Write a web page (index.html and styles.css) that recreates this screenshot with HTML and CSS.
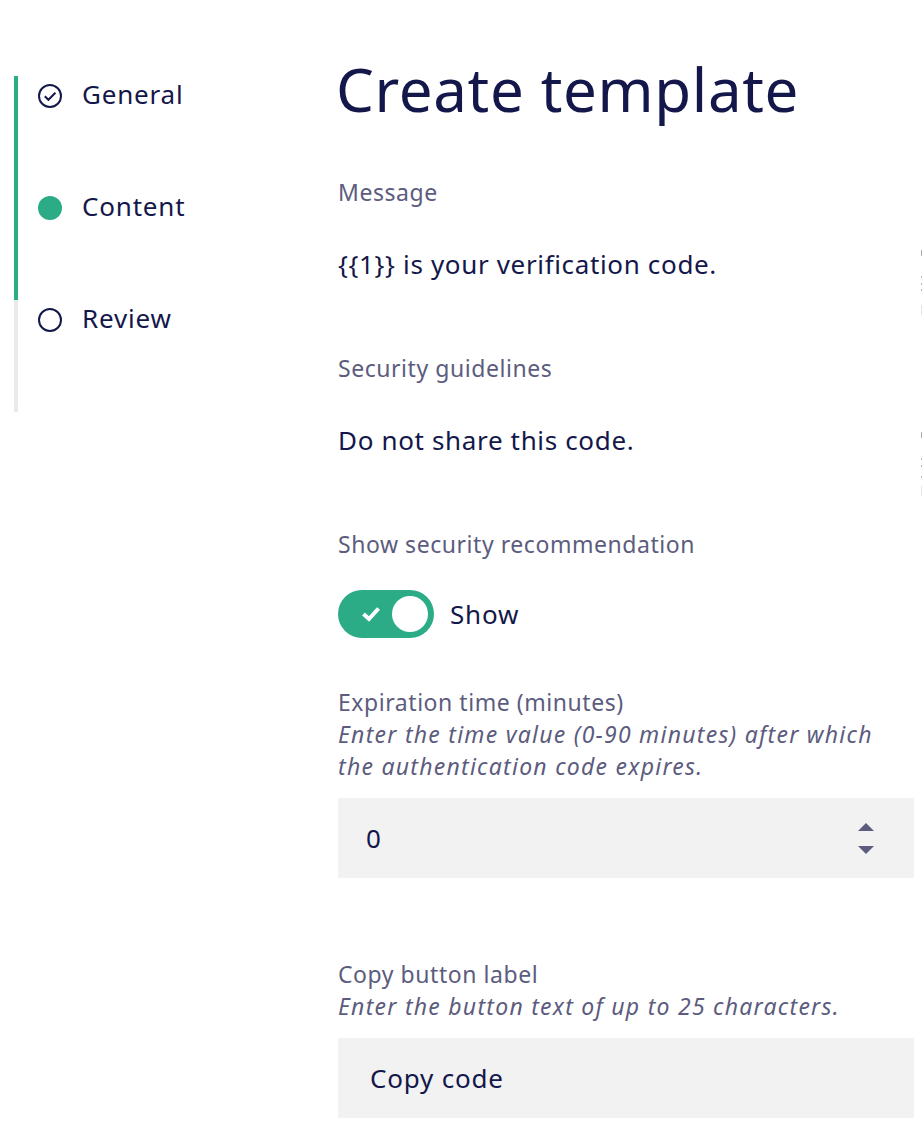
FILE: index.html
```html
<!DOCTYPE html>
<html lang="en">
<head>
    <meta charset="UTF-8">
    <title>Create template</title>
    <link rel="stylesheet" href="styles.css">
</head>
<body>

<div class="page">
    <div class="steps">
        <div class="step">
            <svg class="step-icon" viewBox="0 0 24 24"><circle cx="12" cy="12" r="11" fill="none" stroke="#14174a" stroke-width="2"/><path d="M6.800 12.200l3.600 3.600 7-7" fill="none" stroke="#14174a" stroke-width="2"/></svg>
            <span>General</span>
        </div>
        <div class="step">
            <svg class="step-icon" viewBox="0 0 24 24"><circle cx="12" cy="12" r="12" fill="#2bac87"/></svg>
            <span>Content</span>
        </div>
        <div class="step">
            <svg class="step-icon" viewBox="0 0 24 24"><circle cx="12" cy="12" r="11" fill="none" stroke="#14174a" stroke-width="2"/></svg>
            <span>Review</span>
        </div>
    </div>

    <div class="content">
        <h1>Create template</h1>

        <div class="field-label">Message</div>
        <div class="field-value">{{1}} is your verification code.</div>

        <div class="field-label">Security guidelines</div>
        <div class="field-value">Do not share this code.</div>

        <div class="field-label">Show security recommendation</div>
        <div class="toggle-row">
            <div class="toggle">
                <svg class="toggle-check" viewBox="0 0 18 16"><path d="M1.500 8l5.500 5 9.500-10.500" fill="none" stroke="#fff" stroke-width="4"/></svg>
                <div class="toggle-knob"></div>
            </div>
            <span>Show</span>
        </div>

        <div class="input-block">
            <div class="input-label">Expiration time (minutes)</div>
            <div class="input-hint">Enter the time value (0-90 minutes) after which<br>the authentication code expires.</div>
            <div class="input-box number-box">
                <span>0</span>
                <div class="spinner">
                    <div class="arrow-up"></div>
                    <div class="arrow-down"></div>
                </div>
            </div>
        </div>

        <div class="input-block copy-block">
            <div class="input-label">Copy button label</div>
            <div class="input-hint">Enter the button text of up to 25 characters.</div>
            <div class="input-box"><span>Copy code</span></div>
        </div>
    </div>
</div>

<!-- clipped edge of something off screen -->
<svg class="edge-marks" viewBox="0 0 1 300">
    <rect y="50" width="1" height="6" fill="#a9a9b8"/>
    <rect y="76" width="1" height="2" fill="#b5b5c2"/>
    <rect y="83" width="1" height="2" fill="#b5b5c2"/>
    <rect y="89" width="1" height="2" fill="#b5b5c2"/>
    <rect y="105" width="1" height="10" fill="#e6e6ea"/>
    <rect y="232" width="1" height="6" fill="#a9a9b8"/>
    <rect y="258" width="1" height="2" fill="#b5b5c2"/>
    <rect y="265" width="1" height="2" fill="#b5b5c2"/>
    <rect y="276" width="1" height="2" fill="#b5b5c2"/>
    <rect y="286" width="1" height="10" fill="#e6e6ea"/>
</svg>

</body>
</html>
```

FILE: styles.css
```css
html, body {
    height: 100%;
}

body {
    margin: 0;
    font-family: "Noto Sans", "Open Sans", sans-serif;
    color: #14174a;
    background-color: #fff;
    overflow: hidden;
}

.page {
    display: flex;
    align-items: flex-start;
    padding-top: 54px;
    padding-left: 14px;
}

.steps {
    width: 324px;
    margin-top: 22px;
    flex-shrink: 0;
    height: 336px;
    box-sizing: border-box;
    border-left: 4px solid #e8e8ee;
    position: relative;
}

.steps::before {
    content: "";
    position: absolute;
    left: -4px;
    top: 0;
    width: 4px;
    height: 224px;
    background-color: #2bac87;
}

.step {
    display: flex;
    align-items: center;
    height: 112px;
    padding-left: 20px;
    box-sizing: border-box;
    padding-bottom: 73px;
    font-size: 26px;
    letter-spacing: 0.8px;
}

.step span {
    margin-bottom: 4px;
}

.step-icon {
    width: 24px;
    height: 24px;
    margin-right: 20px;
}

.content {
    width: 576px;
}

h1 {
    margin: 0 0 52px -2px;
    font-size: 60px;
    font-weight: 400;
    line-height: 70px;
    letter-spacing: 0.65px;
}

.field-label, .input-label, .input-hint {
    color: #5c5c7e;
    font-size: 23px;
    line-height: 32px;
    letter-spacing: 0.55px;
}

.field-label {
    margin-bottom: 40px;
}

.field-value {
    font-size: 26px;
    line-height: 32px;
    letter-spacing: 0.65px;
    margin-bottom: 72px;
}

.toggle-row {
    display: flex;
    align-items: center;
    margin-top: -10px;
    height: 48px;
    font-size: 26px;
    letter-spacing: 0.8px;
}

.toggle {
    display: flex;
    align-items: center;
    justify-content: space-between;
    width: 96px;
    height: 48px;
    margin-right: 16px;
    padding: 0 6px 0 24px;
    box-sizing: border-box;
    border-radius: 24px;
    background-color: #2bac87;
}

.toggle-check {
    width: 18px;
    height: 16px;
}

.toggle-knob {
    width: 36px;
    height: 36px;
    border-radius: 50%;
    background-color: #fff;
}

.input-block {
    margin-top: 48px;
}

.input-hint {
    font-style: italic;
    letter-spacing: 1.25px;
}

.input-box {
    display: flex;
    align-items: center;
    justify-content: space-between;
    height: 80px;
    margin-top: 16px;
    padding: 0 40px 0 32px;
    background-color: #f2f2f2;
    font-size: 26px;
    letter-spacing: 0.8px;
}

.number-box {
    padding-left: 28px;
}

.spinner {
    display: flex;
    flex-direction: column;
    gap: 15px;
}

.arrow-up, .arrow-down {
    width: 0;
    height: 0;
    border-left: 8px solid transparent;
    border-right: 8px solid transparent;
}

.arrow-up {
    border-bottom: 8px solid #5c5c7e;
}

.arrow-down {
    border-top: 8px solid #5c5c7e;
}

.copy-block {
    margin-top: 80px;
}

.edge-marks {
    position: absolute;
    right: 0;
    top: 200px;
    width: 1px;
    height: 300px;
}
```
